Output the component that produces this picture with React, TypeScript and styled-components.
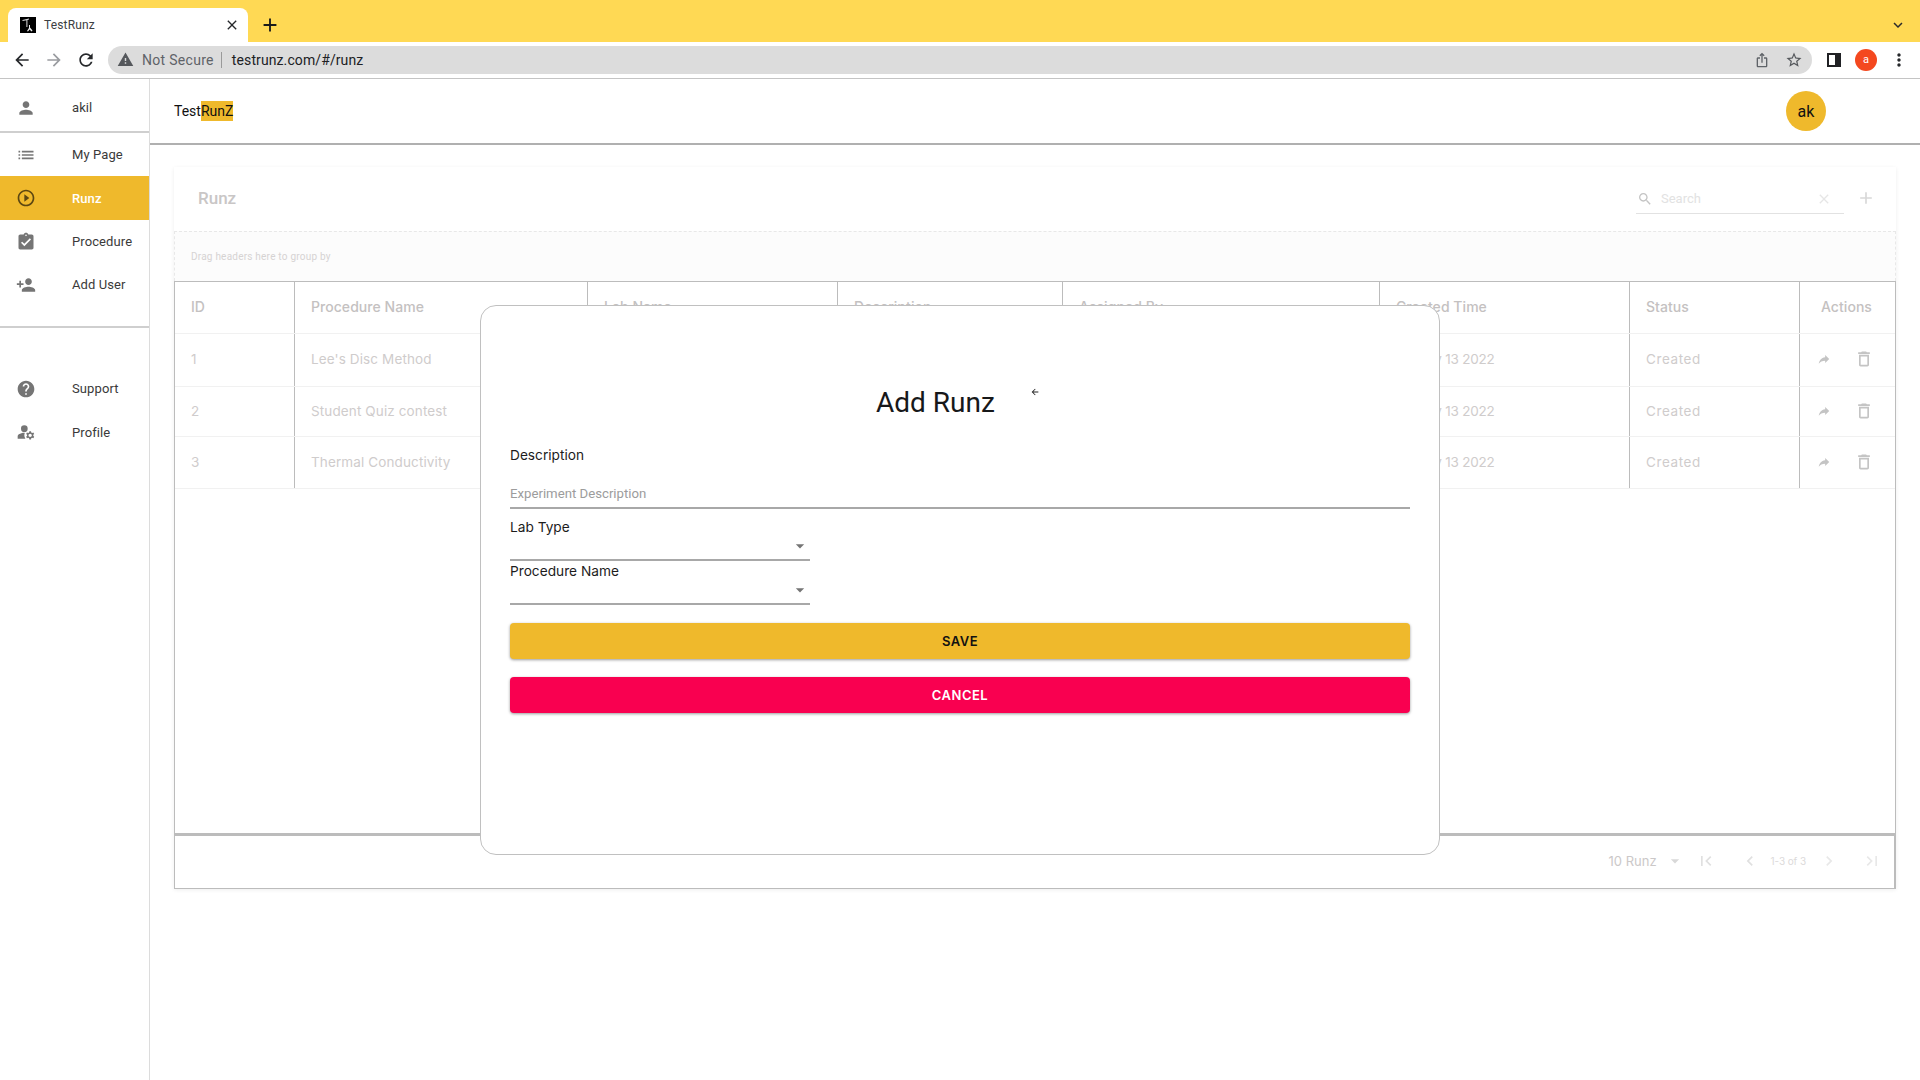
import React from 'react';
import styled, { createGlobalStyle } from 'styled-components';

const UI_FONT = `"Inter", "Open Sans", sans-serif`;
const ROBOTO = `Roboto, "Liberation Sans", sans-serif`;
const COLUMNS = '120px 293px 250px 225px 317px 250px 170px 1fr';

const GlobalStyle = createGlobalStyle`
  html, body { margin: 0; padding: 0; background: #fff; }
  body { width: 1920px; height: 1080px; overflow: hidden; font-family: ${ROBOTO}; }
  * { box-sizing: border-box; }
`;

const Icon = ({ d, size = 24, color = '#757575' }: { d: string | string[]; size?: number; color?: string }) => (
  <svg width={size} height={size} viewBox="0 0 24 24" fill={color} style={{ display: 'block', flex: 'none' }}>
    {(Array.isArray(d) ? d : [d]).map((p, i) => <path key={i} d={p} />)}
  </svg>
);

const paths = {
  person: 'M12 12c2.21 0 4-1.79 4-4s-1.79-4-4-4-4 1.79-4 4 1.79 4 4 4zm0 2c-2.67 0-8 1.34-8 4v2h16v-2c0-2.66-5.33-4-8-4z',
  list: 'M3 13h2v-2H3v2zm0 4h2v-2H3v2zm0-8h2V7H3v2zm4 4h14v-2H7v2zm0 4h14v-2H7v2zM7 7v2h14V7H7z',
  play: 'M10 16.5l6-4.5-6-4.5v9zM12 2C6.48 2 2 6.48 2 12s4.48 10 10 10 10-4.48 10-10S17.52 2 12 2zm0 18c-4.41 0-8-3.59-8-8s3.59-8 8-8 8 3.59 8 8-3.59 8-8 8z',
  assignment: 'M19 3h-4.18C14.4 1.84 13.3 1 12 1c-1.3 0-2.4.84-2.82 2H5c-1.1 0-2 .9-2 2v14c0 1.1.9 2 2 2h14c1.1 0 2-.9 2-2V5c0-1.1-.9-2-2-2zm-7 0c.55 0 1 .45 1 1s-.45 1-1 1-1-.45-1-1 .45-1 1-1zm-2 14l-4-4 1.41-1.41L10 14.17l6.59-6.59L18 9l-8 8z',
  personAdd: 'M15 12c2.21 0 4-1.79 4-4s-1.79-4-4-4-4 1.79-4 4 1.79 4 4 4zm-9-2V7H4v3H1v2h3v3h2v-3h3v-2H6zm9 4c-2.67 0-8 1.34-8 4v2h16v-2c0-2.66-5.33-4-8-4z',
  help: 'M12 2C6.48 2 2 6.48 2 12s4.48 10 10 10 10-4.48 10-10S17.52 2 12 2zm1 17h-2v-2h2v2zm2.07-7.75l-.9.92C13.45 12.9 13 13.5 13 15h-2v-.5c0-1.1.45-2.1 1.17-2.83l1.24-1.26c.37-.36.59-.86.59-1.41 0-1.1-.9-2-2-2s-2 .9-2 2H8c0-2.21 1.79-4 4-4s4 1.79 4 4c0 .88-.36 1.68-.93 2.25z',
  manage: [
    'M10.67 13.02C10.45 13.01 10.23 13 10 13c-2.42 0-4.68.67-6.61 1.82C2.51 15.34 2 16.32 2 17.35V20h9.26C10.47 18.87 10 17.49 10 16c0-1.07.25-2.07.67-2.98z',
    'M10 4a4 4 0 1 0 0 8 4 4 0 0 0 0-8z',
    'M20.75 16c0-.22-.03-.42-.06-.63l1.14-1.01-1-1.73-1.45.49c-.32-.27-.68-.48-1.08-.63L18 11h-2l-.3 1.49c-.4.15-.76.36-1.08.63l-1.45-.49-1 1.73 1.14 1.01c-.03.21-.06.41-.06.63s.03.42.06.63l-1.14 1.01 1 1.73 1.45-.49c.32.27.68.48 1.08.63L16 21h2l.3-1.49c.4-.15.76-.36 1.08-.63l1.45.49 1-1.73-1.14-1.01c.03-.21.06-.41.06-.63zM17 18c-1.1 0-2-.9-2-2s.9-2 2-2 2 .9 2 2-.9 2-2 2z',
  ],
  share: 'M14 9V5l7 7-7 7v-4.1c-5 0-8.5 1.6-11 5.1 1-5 4-10 11-11z',
  trash: 'M6 19c0 1.1.9 2 2 2h8c1.1 0 2-.9 2-2V7H6v12zM8 9h8v10H8V9zm7.5-5l-1-1h-5l-1 1H5v2h14V4z',
  search: 'M15.5 14h-.79l-.28-.27C15.41 12.59 16 11.11 16 9.5 16 5.91 13.09 3 9.5 3S3 5.91 3 9.5 5.91 16 9.5 16c1.61 0 3.09-.59 4.23-1.57l.27.28v.79l5 4.99L20.49 19l-4.99-5zm-6 0C7.01 14 5 11.99 5 9.5S7.01 5 9.5 5 14 7.01 14 9.5 11.99 14 9.5 14z',
  close: 'M19 6.41L17.59 5 12 10.59 6.41 5 5 6.41 10.59 12 5 17.59 6.41 19 12 13.41 17.59 19 19 17.59 13.41 12z',
  add: 'M19 13h-6v6h-2v-6H5v-2h6V5h2v6h6v2z',
  first: 'M18.41 16.59L13.82 12l4.59-4.59L17 6l-6 6 6 6zM6 6h2v12H6z',
  prev: 'M15.41 7.41L14 6l-6 6 6 6 1.41-1.41L10.83 12z',
  next: 'M10 6L8.59 7.41 13.17 12l-4.58 4.59L10 18l6-6z',
  last: 'M5.59 7.41L10.18 12l-4.59 4.59L7 18l6-6-6-6zM16 6h2v12h-2z',
  caret: 'M7 10l5 5 5-5z',
  back: 'M20 11H7.83l5.59-5.59L12 4l-8 8 8 8 1.41-1.41L7.83 13H20v-2z',
  forward: 'M12 4l-1.41 1.41L16.17 11H4v2h12.17l-5.58 5.59L12 20l8-8z',
  reload: 'M17.65 6.35C16.2 4.9 14.21 4 12 4c-4.42 0-7.99 3.58-7.99 8s3.57 8 7.99 8c3.73 0 6.84-2.55 7.73-6h-2.08c-.82 2.33-3.04 4-5.65 4-3.31 0-6-2.69-6-6s2.69-6 6-6c1.66 0 3.14.69 4.22 1.78L13 11h7V4l-2.35 2.35z',
  warning: 'M1 21h22L12 2 1 21zm12-3h-2v-2h2v2zm0-4h-2v-4h2v4z',
  star: 'M22 9.24l-7.19-.62L12 2 9.19 8.63 2 9.24l5.46 4.73L5.82 21 12 17.27 18.18 21l-1.63-7.03L22 9.24zM12 15.4l-3.76 2.27 1-4.28-3.32-2.88 4.38-.38L12 6.1l1.71 4.04 4.38.38-3.32 2.88 1 4.28L12 15.4z',
  share2: 'M16 5l-1.42 1.42-1.59-1.59V16h-1.98V4.83L9.42 6.42 8 5l4-4 4 4zm4 5v11c0 1.1-.9 2-2 2H6c-1.11 0-2-.9-2-2V10c0-1.11.89-2 2-2h3v2H6v11h12V10h-3V8h3c1.1 0 2 .89 2 2z',
  more: 'M12 8c1.1 0 2-.9 2-2s-.9-2-2-2-2 .9-2 2 .9 2 2 2zm0 2c-1.1 0-2 .9-2 2s.9 2 2 2 2-.9 2-2-.9-2-2-2zm0 6c-1.1 0-2 .9-2 2s.9 2 2 2 2-.9 2-2-.9-2-2-2z',
  expand: 'M7.41 8.59L12 13.17l4.59-4.58L18 10l-6 6-6-6z',
};

const Favicon = () => (
  <svg width={16} height={16} viewBox="0 0 16 16" style={{ display: 'block', flex: 'none', marginRight: 8 }}>
    <rect width="16" height="16" fill="#000" />
    <path d="M2.5 3 L9 1.5 L9 2.6 L7.4 3 L7.4 10 L6.4 10 L6.4 3.2 L2.5 4 Z" fill="#ddd" />
    <path d="M9 8 L10 8 L10 10.5 L12.5 13.5 L11.5 14.5 L9.6 12.4 L8 14.5 L7 14 L9 11 Z" fill="#eee" />
  </svg>
);

/* browser chrome */
const TabStrip = styled.div`
  height: 42px;
  background: #ffd954;
  display: flex;
  align-items: flex-end;
  padding: 0 13px 0 8px;
`;

const Tab = styled.div`
  width: 240px;
  height: 34px;
  background: #fff;
  border-radius: 8px 8px 0 0;
  display: flex;
  align-items: center;
  padding: 0 8px 0 12px;
  font-size: 12px;
  color: #3c4043;
`;

const TabTitle = styled.span`
  flex: 1;
  letter-spacing: 0.15px;
`;

const NewTab = styled.div`
  width: 28px;
  height: 34px;
  margin-left: 8px;
  display: flex;
  align-items: center;
  justify-content: center;
`;

const StripEnd = styled.div`
  margin-left: auto;
  height: 34px;
  display: flex;
  align-items: center;
`;

const Toolbar = styled.div`
  height: 37px;
  background: #fff;
  border-bottom: 1px solid #c4c4c4;
  display: flex;
  align-items: center;
  padding: 0 0 1px 6px;
`;

const NavButton = styled.div`
  width: 32px;
  display: flex;
  justify-content: center;
`;

const AddressBar = styled.div`
  width: 1704px;
  height: 28px;
  margin-left: 6px;
  background: #dcdcdc;
  border-radius: 14px;
  display: flex;
  align-items: center;
  padding: 0 9px 0 9px;
  font-size: 14px;
`;

const NotSecure = styled.span`
  color: #5f6368;
  margin-left: 8px;
  padding-right: 7px;
  border-right: 1px solid #9a9a9a;
  line-height: 16px;
  letter-spacing: 0.3px;
`;

const Url = styled.span`
  color: #202124;
  margin-left: 10px;
  flex: 1;
  letter-spacing: 0.1px;
`;

const BarIcons = styled.div`
  display: flex;
  align-items: center;
  gap: 15px;
`;

const ToolbarEnd = styled.div`
  display: flex;
  align-items: center;
  margin-left: 15px;
`;

const PanelGlyph = styled.div`
  width: 14px;
  height: 14px;
  border: 2px solid #202124;
  border-right-width: 6px;
`;

const ProfileDot = styled.div`
  width: 22px;
  height: 22px;
  margin-left: 14px;
  border-radius: 50%;
  background: #f4481f;
  color: #fff;
  font-size: 11px;
  display: flex;
  align-items: center;
  justify-content: center;
`;

const MoreWrap = styled.div`
  margin-left: 12px;
`;

/* page */
const Page = styled.div`
  display: flex;
  height: 1001px;
`;

const Sidebar = styled.nav`
  width: 150px;
  flex: none;
  border-right: 1px solid #dcdcdc;
`;

const SideRow = styled.div<{ $h: number; $active?: boolean; $top?: number }>`
  height: ${p => p.$h}px;
  display: flex;
  align-items: center;
  padding: ${p => p.$top ?? 0}px 0 0 16px;
  background: ${p => (p.$active ? '#efb92c' : 'transparent')};
  color: ${p => (p.$active ? '#fff' : '#3a3a3a')};
  font-size: 13px;
  font-weight: ${p => (p.$active ? 500 : 400)};
  letter-spacing: 0.1px;
`;

const SideIcon = styled.span`
  width: 56px;
  flex: none;
`;

const SideRule = styled.div<{ $mt?: number; $mb?: number }>`
  height: 2px;
  background: #cfcfcf;
  margin: ${p => p.$mt ?? 0}px 0 ${p => p.$mb ?? 0}px;
`;

const Main = styled.main`
  flex: 1;
  min-width: 0;
`;

const Header = styled.header`
  height: 66px;
  border-bottom: 2px solid #b0b0b0;
  display: flex;
  align-items: center;
  justify-content: space-between;
  padding: 0 94px 0 24px;
`;

const Brand = styled.div`
  font-size: 14px;
  color: #111;
  mark {
    background: #efb92c;
    color: #111;
    padding: 2px 0;
  }
`;

const Avatar = styled.div`
  width: 40px;
  height: 40px;
  border-radius: 50%;
  background: #efb92c;
  color: #111;
  font-size: 16px;
  display: flex;
  align-items: center;
  justify-content: center;
`;

const TablePaper = styled.section`
  width: 1722px;
  margin: 22px 0 0 24px;
  box-shadow: 0 1px 4px rgba(0, 0, 0, 0.07);
`;

const TableTitleBar = styled.div`
  height: 64px;
  display: flex;
  align-items: center;
  padding: 0 20px 2px 24px;
`;

const TableTitle = styled.h2`
  flex: 1;
  margin: 0;
  font-size: 17px;
  font-weight: 500;
  color: #c9c6c6;
`;

const SearchBox = styled.div`
  width: 208px;
  height: 30px;
  margin-top: 2px;
  border-bottom: 1px solid #e2e2e2;
  display: flex;
  align-items: center;
  padding-left: 1px;
  font-size: 13px;
  color: #e2e2e2;
  span {
    flex: 1;
    margin-left: 8px;
  }
`;

const ClearWrap = styled.div`
  margin-right: 12px;
`;

const AddWrap = styled.div`
  margin: 0 0 0 12px;
`;

const GroupBar = styled.div`
  height: 50px;
  background: #fcfcfc;
  border: 1px dashed #e8e8e8;
  border-bottom: 0;
  padding-left: 16px;
  display: flex;
  align-items: center;
  font-size: 10px;
  letter-spacing: 0.22px;
  color: #d6d3d3;
`;

const TableBody = styled.div`
  height: 552px;
  border: solid #bcbcbc;
  border-width: 1px 1px 0 1px;
`;

const Row = styled.div<{ $h: number; $head?: boolean }>`
  display: grid;
  grid-template-columns: ${COLUMNS};
  height: ${p => p.$h}px;
  border-bottom: 1px solid #f1f1f1;
  font-family: ${UI_FONT};
  font-size: ${p => (p.$head ? 14 : 13.5)}px;
  letter-spacing: ${p => (p.$head ? 0.05 : 0.12)}px;
  font-weight: ${p => (p.$head ? 500 : 400)};
  color: ${p => (p.$head ? '#c4c1c1' : '#cfcccc')};
`;

const Cell = styled.div`
  display: flex;
  align-items: center;
  padding: 0 0 2px 16px;
  white-space: nowrap;
  overflow: hidden;
  border-right: 1px solid #bcbcbc;
  &:last-child {
    border-right: 0;
  }
`;

const DateCell = styled(Cell)`
  padding-left: 35px;
  letter-spacing: -0.2px;
`;

const StatusCell = styled(Cell)`
  letter-spacing: 0.6px;
`;

const ActionCell = styled(Cell)`
  gap: 23px;
  padding-left: 17px;
`;

const HeadActions = styled(Cell)`
  padding-left: 21px;
`;

const TableFooter = styled.div`
  height: 56px;
  border: solid #bcbcbc;
  border-width: 3px 2px 1px 1px;
  display: flex;
  align-items: center;
  justify-content: flex-end;
  padding: 0 12px 2px 0;
  font-family: ${UI_FONT};
`;

const PageSize = styled.span`
  font-size: 13px;
  color: #cbc8c8;
  margin-right: 8px;
`;

const PageCount = styled.span`
  font-size: 10px;
  color: #dcdada;
  margin: 0 13px 0 11px;
  letter-spacing: -0.1px;
`;

const PagerIcons = styled.div<{ $gap: number; $ml?: number }>`
  display: flex;
  gap: ${p => p.$gap}px;
  margin-left: ${p => p.$ml ?? 0}px;
`;

/* dialog */
const Overlay = styled.div`
  position: fixed;
  inset: 0;
  padding-top: 79px;
  display: flex;
  align-items: center;
  justify-content: center;
`;

const Dialog = styled.div`
  width: 960px;
  height: 550px;
  background: #fff;
  border: 1px solid #c0c0c0;
  border-radius: 16px;
  padding: 0 29px;
`;

const DialogHead = styled.div`
  height: 133px;
  padding-top: 76px;
  display: flex;
  align-items: flex-start;
  padding-left: 366px;
`;

const DialogTitle = styled.h1`
  margin: 0;
  font-size: 28px;
  font-weight: 400;
  line-height: 42px;
  color: #17181a;
`;

const SmallArrow = styled.div`
  margin: 5px 0 0 35px;
`;

const FieldLabel = styled.label`
  display: block;
  font-family: ${UI_FONT};
  font-size: 13.7px;
  line-height: 20px;
  color: #1c1c1c;
`;

const TextField = styled.div`
  margin-top: 6px;
`;

const Placeholder = styled.div`
  margin-top: 19px;
  height: 25px;
  line-height: 20px;
  font-size: 13.2px;
  color: #9c9c9c;
  border-bottom: 2px solid #a8a8a8;
`;

const SelectField = styled.div`
  width: 300px;
  height: 44px;
`;

const FirstSelect = styled(SelectField)`
  margin-top: 8px;
`;

const SelectLine = styled.div`
  height: 24px;
  border-bottom: 2px solid #a8a8a8;
  display: flex;
  justify-content: flex-end;
  svg {
    margin-top: -1px;
  }
`;

const DialogButton = styled.button<{ $bg: string; $fg: string }>`
  display: block;
  width: 900px;
  height: 36px;
  border: 0;
  border-radius: 4px;
  background: ${p => p.$bg};
  color: ${p => p.$fg};
  font-family: ${UI_FONT};
  font-size: 13px;
  font-weight: 600;
  letter-spacing: 0.5px;
  box-shadow: 0 1px 3px rgba(0, 0, 0, 0.4);
`;

const SaveButton = styled(DialogButton)`
  margin-top: 18px;
`;

const CancelButton = styled(DialogButton)`
  margin-top: 18px;
`;

const rows = [
  { id: 1, name: "Lee's Disc Method" },
  { id: 2, name: 'Student Quiz contest' },
  { id: 3, name: 'Thermal Conductivity' },
];

const rowHeights = [53, 50, 52];

const App = () => (
  <>
    <GlobalStyle />
    <TabStrip>
      <Tab>
        <Favicon />
        <TabTitle>TestRunz</TabTitle>
        <Icon d={paths.close} size={16} color="#26282b" />
      </Tab>
      <NewTab><Icon d={paths.add} size={22} color="#1a1a1a" /></NewTab>
      <StripEnd><Icon d={paths.expand} size={18} color="#2b2b2b" /></StripEnd>
    </TabStrip>
    <Toolbar>
      <NavButton><Icon d={paths.back} size={20} color="#26282b" /></NavButton>
      <NavButton><Icon d={paths.forward} size={20} color="#9a9ca0" /></NavButton>
      <NavButton><Icon d={paths.reload} size={20} color="#26282b" /></NavButton>
      <AddressBar>
        <Icon d={paths.warning} size={17} color="#55585c" />
        <NotSecure>Not Secure</NotSecure>
        <Url>testrunz.com/#/runz</Url>
        <BarIcons>
          <Icon d={paths.share2} size={16} color="#5f6368" />
          <Icon d={paths.star} size={18} color="#55585c" />
        </BarIcons>
      </AddressBar>
      <ToolbarEnd>
        <PanelGlyph />
        <ProfileDot>a</ProfileDot>
        <MoreWrap><Icon d={paths.more} size={20} color="#26282b" /></MoreWrap>
      </ToolbarEnd>
    </Toolbar>
    <Page>
      <Sidebar>
        <SideRow $h={52} $top={5}><SideIcon><Icon d={paths.person} size={20} /></SideIcon>akil</SideRow>
        <SideRule />
        <SideRow $h={43}><SideIcon><Icon d={paths.list} size={20} /></SideIcon>My Page</SideRow>
        <SideRow $h={44} $active><SideIcon><Icon d={paths.play} size={20} color="#5c4712" /></SideIcon>Runz</SideRow>
        <SideRow $h={43}><SideIcon><Icon d={paths.assignment} size={20} /></SideIcon>Procedure</SideRow>
        <SideRow $h={43}><SideIcon><Icon d={paths.personAdd} size={20} /></SideIcon>Add User</SideRow>
        <SideRule $mt={20} $mb={39} />
        <SideRow $h={43}><SideIcon><Icon d={paths.help} size={20} /></SideIcon>Support</SideRow>
        <SideRow $h={44}><SideIcon><Icon d={paths.manage} size={20} /></SideIcon>Profile</SideRow>
      </Sidebar>
      <Main>
        <Header>
          <Brand>Test<mark>RunZ</mark></Brand>
          <Avatar>ak</Avatar>
        </Header>
        <TablePaper>
          <TableTitleBar>
            <TableTitle>Runz</TableTitle>
            <SearchBox>
              <Icon d={paths.search} size={16} color="#c4c4c4" />
              <span>Search</span>
              <ClearWrap><Icon d={paths.close} size={16} color="#e6e6e6" /></ClearWrap>
            </SearchBox>
            <AddWrap><Icon d={paths.add} size={20} color="#d8d8d8" /></AddWrap>
          </TableTitleBar>
          <GroupBar>Drag headers here to group by</GroupBar>
          <TableBody>
            <Row $h={52} $head>
              <Cell>ID</Cell>
              <Cell>Procedure Name</Cell>
              <Cell>Lab Name</Cell>
              <Cell>Description</Cell>
              <Cell>Assigned By</Cell>
              <Cell>Created Time</Cell>
              <Cell>Status</Cell>
              <HeadActions>Actions</HeadActions>
            </Row>
            {rows.map((r, i) => (
              <Row key={r.id} $h={rowHeights[i]}>
                <Cell>{r.id}</Cell>
                <Cell>{r.name}</Cell>
                <Cell />
                <Cell />
                <Cell />
                <DateCell>May 13 2022</DateCell>
                <StatusCell>Created</StatusCell>
                <ActionCell>
                  <Icon d={paths.share} size={14} color="#c4c4c4" />
                  <Icon d={paths.trash} size={20} color="#c4c4c4" />
                </ActionCell>
              </Row>
            ))}
          </TableBody>
          <TableFooter>
            <PageSize>10 Runz</PageSize>
            <Icon d={paths.caret} size={20} color="#d8d8d8" />
            <PagerIcons $gap={24} $ml={11}>
              <Icon d={paths.first} size={20} color="#e0e0e0" />
              <Icon d={paths.prev} size={20} color="#e0e0e0" />
            </PagerIcons>
            <PageCount>1-3 of 3</PageCount>
            <PagerIcons $gap={23}>
              <Icon d={paths.next} size={20} color="#e8e8e8" />
              <Icon d={paths.last} size={20} color="#e8e8e8" />
            </PagerIcons>
          </TableFooter>
        </TablePaper>
      </Main>
    </Page>
    <Overlay>
      <Dialog>
        <DialogHead>
          <DialogTitle>Add Runz</DialogTitle>
          <SmallArrow><Icon d={paths.back} size={10} color="#222" /></SmallArrow>
        </DialogHead>
        <TextField>
          <FieldLabel>Description</FieldLabel>
          <Placeholder>Experiment Description</Placeholder>
        </TextField>
        <FirstSelect>
          <FieldLabel>Lab Type</FieldLabel>
          <SelectLine><Icon d={paths.caret} size={20} color="#757575" /></SelectLine>
        </FirstSelect>
        <SelectField>
          <FieldLabel>Procedure Name</FieldLabel>
          <SelectLine><Icon d={paths.caret} size={20} color="#757575" /></SelectLine>
        </SelectField>
        <SaveButton $bg="#efb92c" $fg="#111">SAVE</SaveButton>
        <CancelButton $bg="#f90050" $fg="#fff">CANCEL</CancelButton>
      </Dialog>
    </Overlay>
  </>
);

export default App;
